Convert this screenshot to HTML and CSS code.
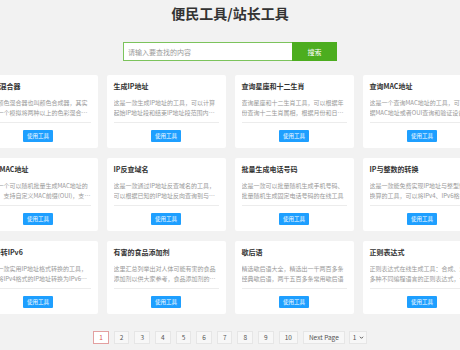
FILE: index.html
```html
<!DOCTYPE html>
<html lang="zh-CN">
<head>
<meta charset="utf-8">
<title>便民工具/站长工具</title>
<link rel="stylesheet" href="styles.css">
</head>
<body>
<header class="top">
  <h1 class="site-title">便民工具/站长工具</h1>
  <form class="search">
    <input class="search-input" type="text" placeholder="请输入要查找的内容">
    <button class="search-btn" type="button">搜索</button>
  </form>
</header>

<main class="grid-wrap">
  <div class="grid">
    <div class="card">
      <div class="card-title">颜色混合器</div>
      <div class="card-desc">在线颜色混合器也叫颜色合成器，其实就是一个模拟将两种以上的色彩混合后得到新颜色的工具</div>
      <div class="card-foot"><span class="use-btn">使用工具</span></div>
    </div>
    <div class="card">
      <div class="card-title">生成IP地址</div>
      <div class="card-desc">这是一款生成IP地址的工具，可以计算起始IP地址段和结束IP地址段范围内的所有IP地址</div>
      <div class="card-foot"><span class="use-btn">使用工具</span></div>
    </div>
    <div class="card">
      <div class="card-title">查询星座和十二生肖</div>
      <div class="card-desc">查询星座和十二生肖工具，可以根据年份查询十二生肖属相，根据月份和日期查询星座</div>
      <div class="card-foot"><span class="use-btn">使用工具</span></div>
    </div>
    <div class="card">
      <div class="card-title">查询MAC地址</div>
      <div class="card-desc">这是一个查询MAC地址的工具，可以根据MAC地址或者OUI查询和验证设备厂商信息</div>
      <div class="card-foot"><span class="use-btn">使用工具</span></div>
    </div>

    <div class="card">
      <div class="card-title">随机MAC地址</div>
      <div class="card-desc">这是一个可以随机批量生成MAC地址的工具，支持自定义MAC前缀(OUI)，支持多种格式</div>
      <div class="card-foot"><span class="use-btn">使用工具</span></div>
    </div>
    <div class="card">
      <div class="card-title">IP反查域名</div>
      <div class="card-desc">这是一款通过IP地址反查域名的工具，可以根据已知的IP地址反向查询到与之绑定的域名</div>
      <div class="card-foot"><span class="use-btn">使用工具</span></div>
    </div>
    <div class="card">
      <div class="card-title">批量生成电话号码</div>
      <div class="card-desc">这是一款可以批量随机生成手机号码、批量随机生成固定电话号码的在线工具</div>
      <div class="card-foot"><span class="use-btn">使用工具</span></div>
    </div>
    <div class="card">
      <div class="card-title">IP与整数的转换</div>
      <div class="card-desc">这是一款能免费实现IP地址与整型数互换算的工具，可以将IPv4、IPv6格式的IP地址转换为整数</div>
      <div class="card-foot"><span class="use-btn">使用工具</span></div>
    </div>

    <div class="card">
      <div class="card-title">IPv4转IPv6</div>
      <div class="card-desc">这是一款实用IP地址格式转换的工具，可以将IPv4格式的IP地址转换为IPv6格式的地址</div>
      <div class="card-foot"><span class="use-btn">使用工具</span></div>
    </div>
    <div class="card">
      <div class="card-title">有害的食品添加剂</div>
      <div class="card-desc">这里汇总列举出对人体可能有害的食品添加剂以供大家参考，食品添加剂的使用需谨慎</div>
      <div class="card-foot"><span class="use-btn">使用工具</span></div>
    </div>
    <div class="card">
      <div class="card-title">歇后语</div>
      <div class="card-desc">精选歇后语大全，精选出一千两百多条经典歇后语，两千五百多条常用歇后语</div>
      <div class="card-foot"><span class="use-btn">使用工具</span></div>
    </div>
    <div class="card">
      <div class="card-title">正则表达式</div>
      <div class="card-desc">正则表达式在线生成工具：合成、测试多种不同编程语言的正则表达式，一键生成常用正则</div>
      <div class="card-foot"><span class="use-btn">使用工具</span></div>
    </div>
  </div>
</main>

<nav class="pager">
  <span class="page current">1</span>
  <span class="page">2</span>
  <span class="page">3</span>
  <span class="page">4</span>
  <span class="page">5</span>
  <span class="page">6</span>
  <span class="page">7</span>
  <span class="page">8</span>
  <span class="page">9</span>
  <span class="page">10</span>
  <span class="page next">Next Page</span>
  <span class="page-select">1<svg class="chev" viewBox="0 0 8 8" width="5" height="5"><path d="M1.5 2.8 L4 5.3 L6.5 2.8" fill="none" stroke="#444" stroke-width="1.4"/></svg></span>
</nav>
</body>
</html>
```

FILE: styles.css
```css
html, body {
  margin: 0;
  padding: 0;
}
body {
  background: #f2f2f2;
  font-family: "Noto Sans CJK SC", "Noto Sans", sans-serif;
  color: #333;
  height: 350px;
  overflow: hidden;
}

.top {
  padding-top: 3px;
}
.site-title {
  margin: 0;
  font-size: 14px;
  line-height: 20px;
  font-weight: 700;
  color: #333;
  text-align: center;
}
.search {
  margin: 19px 0 0;
  display: flex;
  justify-content: center;
}
.search-input {
  width: 169px;
  height: 19px;
  box-sizing: border-box;
  border: 1px solid #7cc35c;
  border-right: 0;
  padding: 0 4px;
  margin: 0;
  font-family: inherit;
  font-size: 7px;
  color: #333;
  background: #fff;
  outline: none;
}
.search-input::placeholder {
  color: #9a9a9a;
}
.search-btn {
  width: 45px;
  height: 19px;
  margin: 0;
  padding: 0;
  border: 0;
  background: #4cad1f;
  color: #fff;
  font-family: inherit;
  font-size: 7px;
}

.grid-wrap {
  display: flex;
  justify-content: center;
  margin-top: 14px;
}
.grid {
  flex: none;
  width: 503px;
  display: grid;
  grid-template-columns: repeat(4, 119px);
  column-gap: 9px;
  row-gap: 10px;
}
.card {
  background: #fff;
  border-radius: 2px;
  padding: 4px 7px 6px;
  display: flex;
  flex-direction: column;
}
.card-title {
  font-size: 7px;
  line-height: 14px;
  font-weight: 700;
  color: #333;
  white-space: nowrap;
}
.card-desc {
  margin-top: 5px;
  font-size: 6px;
  line-height: 10px;
  height: 20px;
  color: #999;
  display: -webkit-box;
  -webkit-line-clamp: 2;
  -webkit-box-orient: vertical;
  overflow: hidden;
}
.card-foot {
  margin-top: 4px;
  border-top: 1px solid #ececec;
  padding-top: 7px;
  display: flex;
  justify-content: center;
}
.use-btn {
  width: 30px;
  height: 12px;
  background: #1e9fff;
  color: #fff;
  font-size: 5.5px;
  line-height: 12px;
  text-align: center;
  border-radius: 1px;
}

.pager {
  margin-top: 17px;
  display: flex;
  justify-content: center;
  align-items: center;
  gap: 5px;
  font-size: 6.5px;
  color: #555;
}
.page {
  min-width: 15px;
  height: 13px;
  box-sizing: border-box;
  padding: 0 5px;
  border: 1px solid #e6e6e6;
  background: #f7f7f7;
  line-height: 11px;
  text-align: center;
}
.page.current {
  border-color: #e3a0a0;
  background: #fff;
  color: #d9534f;
}
.page-select {
  margin-left: -1px;
  width: 18px;
  height: 13px;
  box-sizing: border-box;
  border: 1px solid #e6e6e6;
  background: #f7f7f7;
  display: flex;
  align-items: center;
  justify-content: space-between;
  padding: 0 2px 0 3px;
  line-height: 11px;
}
.chev {
  display: block;
}
```
